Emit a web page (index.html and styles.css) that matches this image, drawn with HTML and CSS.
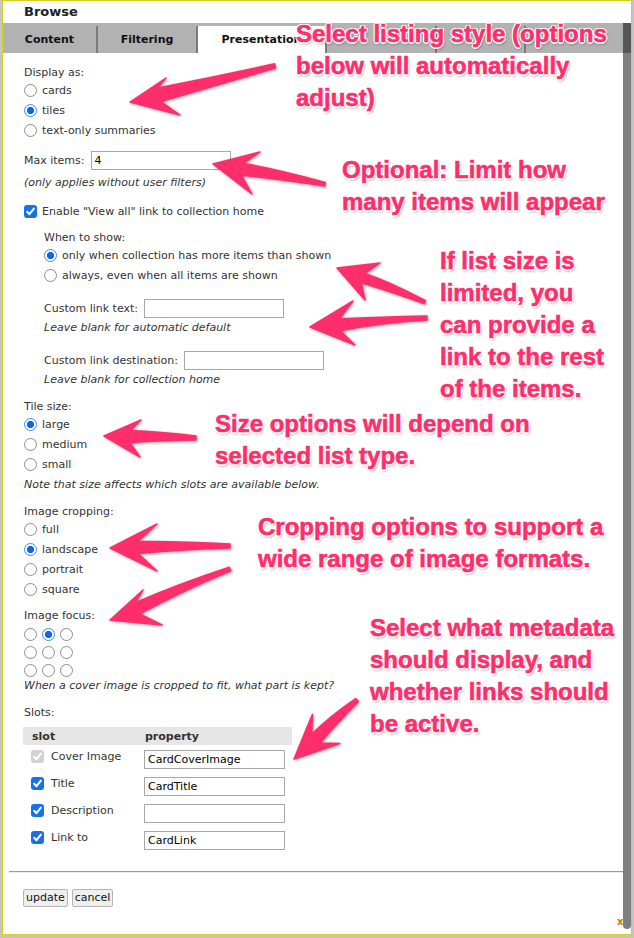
FILE: index.html
```html
<!DOCTYPE html>
<html>
<head>
<meta charset="utf-8">
<title>Browse</title>
<link rel="stylesheet" href="styles.css">
</head>
<body>
<div class="dialog">
  <div class="titlebar">Browse</div>
  <div class="frame">
    <div class="main">
      <div class="tabs">
        <div class="tab t-content">Content</div>
        <div class="tab t-filter">Filtering</div>
        <div class="tab t-pres active">Presentation</div>
        <div class="tab t-four"></div>
        <div class="tab t-five"></div>
        <div class="tab t-rest"></div>
      </div>
      <div class="panel">
        <div class="lbl">Display as:</div>
        <div class="opt"><span class="radio"></span>cards</div>
        <div class="opt"><span class="radio on"></span>tiles</div>
        <div class="opt"><span class="radio"></span>text-only summaries</div>

        <div class="row f-max">Max items: <span class="input">4</span></div>
        <div class="hint h-max">(only applies without user filters)</div>

        <div class="opt f-enable"><span class="cb"><svg viewBox="0 0 13 13" width="13" height="13"><path d="M3.2 6.8 L5.5 9.2 L9.9 3.6" fill="none" stroke="#fff" stroke-width="2" stroke-linecap="round" stroke-linejoin="round"/></svg></span>Enable "View all" link to collection home</div>

        <div class="sub">
          <div class="lbl f-when">When to show:</div>
          <div class="opt"><span class="radio on"></span>only when collection has more items than shown</div>
          <div class="opt"><span class="radio"></span>always, even when all items are shown</div>

          <div class="row f-linktext">Custom link text: <span class="input"></span></div>
          <div class="hint h-link">Leave blank for automatic default</div>

          <div class="row f-linkdest">Custom link destination: <span class="input"></span></div>
          <div class="hint h-link">Leave blank for collection home</div>
        </div>

        <div class="lbl f-group">Tile size:</div>
        <div class="opt"><span class="radio on"></span>large</div>
        <div class="opt"><span class="radio"></span>medium</div>
        <div class="opt"><span class="radio"></span>small</div>
        <div class="hint h-size">Note that size affects which slots are available below.</div>

        <div class="lbl f-group">Image cropping:</div>
        <div class="opt"><span class="radio"></span>full</div>
        <div class="opt"><span class="radio on"></span>landscape</div>
        <div class="opt"><span class="radio"></span>portrait</div>
        <div class="opt"><span class="radio"></span>square</div>

        <div class="lbl f-focus">Image focus:</div>
        <div class="focus">
          <span class="radio"></span><span class="radio on"></span><span class="radio"></span>
          <span class="radio"></span><span class="radio"></span><span class="radio"></span>
          <span class="radio"></span><span class="radio"></span><span class="radio"></span>
        </div>
        <div class="hint">When a cover image is cropped to fit, what part is kept?</div>

        <div class="lbl f-group">Slots:</div>
        <table class="slots">
          <thead>
            <tr><th class="c-slot">slot</th><th class="c-prop">property</th></tr>
          </thead>
          <tbody>
            <tr>
              <td class="c-slot"><div class="slot"><span class="cb off"><svg viewBox="0 0 13 13" width="13" height="13"><path d="M3.2 6.8 L5.5 9.2 L9.9 3.6" fill="none" stroke="#fff" stroke-width="2" stroke-linecap="round" stroke-linejoin="round"/></svg></span>Cover Image</div></td>
              <td class="c-prop"><span class="input">CardCoverImage</span></td>
            </tr>
            <tr>
              <td class="c-slot"><div class="slot"><span class="cb"><svg viewBox="0 0 13 13" width="13" height="13"><path d="M3.2 6.8 L5.5 9.2 L9.9 3.6" fill="none" stroke="#fff" stroke-width="2" stroke-linecap="round" stroke-linejoin="round"/></svg></span>Title</div></td>
              <td class="c-prop"><span class="input">CardTitle</span></td>
            </tr>
            <tr>
              <td class="c-slot"><div class="slot"><span class="cb"><svg viewBox="0 0 13 13" width="13" height="13"><path d="M3.2 6.8 L5.5 9.2 L9.9 3.6" fill="none" stroke="#fff" stroke-width="2" stroke-linecap="round" stroke-linejoin="round"/></svg></span>Description</div></td>
              <td class="c-prop"><span class="input"></span></td>
            </tr>
            <tr>
              <td class="c-slot"><div class="slot"><span class="cb"><svg viewBox="0 0 13 13" width="13" height="13"><path d="M3.2 6.8 L5.5 9.2 L9.9 3.6" fill="none" stroke="#fff" stroke-width="2" stroke-linecap="round" stroke-linejoin="round"/></svg></span>Link to</div></td>
              <td class="c-prop"><span class="input">CardLink</span></td>
            </tr>
          </tbody>
        </table>
      </div>
      <div class="footer">
        <div class="sep"></div>
        <div class="buttons"><span class="btn">update</span><span class="btn">cancel</span></div>
      </div>
    </div>
    <div class="scrollbar"><div class="sb-top"></div></div>
  </div>
  <span class="resize">x</span>
</div>

<div class="notes">
  <svg class="arrows" width="634" height="938" viewBox="0 0 634 938">
    <g fill="#fe2e6c" stroke="#fe2e6c" stroke-width="1.5" stroke-linejoin="round">
      <path d="M274.6 63.8 Q210 78 157.5 87.9 L166 78 L130 102 L180 115 L160.9 101.5 Q220 84 275.4 68 Z"/>
      <path d="M325.3 182.5 Q280 170 243.6 163.4 L260 152 L213 164 L252 194 L241.4 175.2 Q285 180 324.7 186 Z"/>
      <path d="M425.5 300.6 Q390 282 364.9 273.4 L380 263 L337 268 L365 300 L361.3 282.8 Q395 293 424.5 303.8 Z"/>
      <path d="M426.9 316 Q380 317 339.4 318.7 L353 301 L310 327 L355 345 L340.4 330.7 Q385 322 427.1 320 Z"/>
      <path d="M196 436 Q160 432 130.1 430.6 L141 420 L104 436 L140 457 L129.9 442.6 Q165 440 196 440 Z"/>
      <path d="M230 544 Q180 541 137.9 541.5 L157 524 L110 548 L157 571 L138.1 553.5 Q185 549 230 548 Z"/>
      <path d="M229.2 567.2 Q175 585 135.3 602.8 L143 590 L110 620 L162 625 L139.9 613.8 Q190 587 230.8 570.8 Z"/>
      <path d="M355.6 698.5 Q330 716 311.8 734.1 L312.4 714.3 L294 759 L339.8 743.5 L320 742.9 Q340 720 358.4 701.5 Z"/>
    </g>
  </svg>
  <div class="callout c1">Select listing style (options<br>below will automatically<br>adjust)</div>
  <div class="callout c2">Optional: Limit how<br>many items will appear</div>
  <div class="callout c3">If list size is<br>limited, you<br>can provide a<br>link to the rest<br>of the items.</div>
  <div class="callout c4">Size options will depend on<br>selected list type.</div>
  <div class="callout c5">Cropping options to support a<br>wide range of image formats.</div>
  <div class="callout c6">Select what metadata<br>should display, and<br>whether links should<br>be active.</div>
</div>
</body>
</html>
```

FILE: styles.css
```css
html, body {
  margin: 0;
  padding: 0;
}

body {
  width: 634px;
  height: 938px;
  overflow: hidden;
  background: #c5c5c5;
  font-family: "DejaVu Sans", Verdana, sans-serif;
  font-size: 11px;
  color: #333;
  position: relative;
}

.dialog {
  position: relative;
  margin-left: 2px;
  width: 628px;
  height: 933px;
  border: 1px solid #d6d01c;
  background: #fff;
  display: flex;
  flex-direction: column;
}

.titlebar {
  height: 22px;
  line-height: 22px;
  padding-left: 21px;
  font-weight: bold;
  font-size: 13px;
  color: #222;
}

.frame {
  flex: 1;
  display: flex;
}

.main {
  width: 620px;
  display: flex;
  flex-direction: column;
}

.scrollbar {
  width: 8px;
  margin-bottom: 5px;
  background: #7e7e7e;
  border-radius: 0 0 4px 4px;
}

.sb-top {
  height: 30px;
  background: #555;
}

/* tabs */
.tabs {
  height: 30px;
  background: #b2b2b2;
  display: flex;
  align-items: flex-end;
}

.tab {
  box-sizing: border-box;
  height: 27px;
  line-height: 27px;
  text-align: center;
  font-weight: bold;
  font-size: 11px;
  color: #111;
  border-left: 2px solid #7a7a7a;
}

.t-content { width: 93px; border-left: 0; }
.t-filter { width: 100px; }
.t-pres { width: 129px; }
.t-four { width: 110px; }
.t-five { width: 89px; }
.t-rest { flex: 1; }

.tab.active {
  background: #fff;
}

/* panel */
.panel {
  flex: 1;
  padding: 13px 0 0 21px;
}

.lbl {
  line-height: 14px;
}

.hint {
  font-style: italic;
  line-height: 14px;
}

.opt {
  height: 20px;
  display: flex;
  align-items: center;
  gap: 5px;
}

.row {
  height: 20px;
  display: flex;
  align-items: center;
  gap: 6px;
}

.f-max { margin-top: 10px; }
.h-max { margin-top: 6px; }
.f-enable { margin-top: 11px; }
.f-when { margin-top: 10px; }
.f-linktext { margin-top: 13px; }
.f-linkdest { margin-top: 15px; }
.h-link { margin-top: 3px; }
.f-group { margin-top: 13px; }
.h-size { margin-top: 4px; }
.f-focus { margin-top: 10px; }

.sub {
  padding-left: 20px;
}

.input {
  box-sizing: border-box;
  display: inline-block;
  vertical-align: top;
  width: 140px;
  height: 19px;
  line-height: 17px;
  padding: 0 3px;
  border: 1px solid #a8a8a8;
  background: #fff;
  color: #000;
  font-size: 11px;
}

/* custom controls */
.radio {
  box-sizing: border-box;
  display: inline-block;
  flex: none;
  width: 13px;
  height: 13px;
  border-radius: 50%;
  border: 1px solid #8d8d8d;
  background: #fff;
}

.radio.on {
  border: 1.5px solid #3a8cf2;
  background: radial-gradient(circle, #0d66e3 0 3.3px, #fff 3.9px);
}

.cb {
  flex: none;
  display: inline-flex;
  width: 13px;
  height: 13px;
  border-radius: 3px;
  background: #1770ec;
}

.cb.off {
  background: #d2d2d2;
}

.focus {
  margin-top: 2px;
  width: 54px;
  display: grid;
  grid-template-columns: repeat(3, 13px);
  grid-auto-rows: 18px;
  column-gap: 5px;
  align-items: center;
}

/* slots table */
.slots {
  margin: 7px 0 0 -1px;
  width: 269px;
  border-collapse: collapse;
}

.slots th {
  height: 18px;
  padding: 0;
  background: #e6e6e6;
  text-align: left;
  font-weight: bold;
  font-size: 11px;
  color: #333;
}

.slots th.c-slot { padding-left: 9px; width: 108px; }
.slots th.c-prop { padding-left: 5px; }

.slots td {
  vertical-align: top;
  padding: 5px 0 3px 0;
  height: 19px;
}

.slots td.c-slot { padding-left: 8px; }
.slots td.c-prop { padding-left: 4px; }

.slot {
  display: flex;
  align-items: center;
  gap: 7px;
  height: 13px;
}

.c-prop .input {
  width: 141px;
}

/* footer */
.footer {
  padding-bottom: 27px;
}

.sep {
  margin-left: 6px;
  border-top: 1px solid #9b9b9b;
  border-bottom: 1px solid #ececec;
}

.buttons {
  margin: 16px 0 0 20px;
  display: flex;
  gap: 4px;
}

.btn {
  box-sizing: border-box;
  height: 18px;
  line-height: 16px;
  padding: 0 2px;
  border: 1px solid #b4b4b4;
  border-radius: 2px;
  background: #efefef;
  color: #111;
  font-size: 11px;
}

.resize {
  position: absolute;
  left: 614px;
  top: 916px;
  font-size: 10px;
  line-height: 10px;
  font-weight: bold;
  color: #e07000;
}

/* annotations */
.notes {
  position: absolute;
  left: 0;
  top: 0;
  width: 634px;
  height: 938px;
  pointer-events: none;
}

.arrows {
  position: absolute;
  left: 0;
  top: 0;
  filter: drop-shadow(1px 1.5px 1.5px rgba(0, 0, 0, 0.35));
}

.callout {
  position: absolute;
  white-space: nowrap;
  font-family: "Liberation Sans", Arial, sans-serif;
  font-weight: bold;
  font-size: 24px;
  line-height: 32px;
  color: #fe2e6c;
  -webkit-text-stroke: 0.6px #fe2e6c;
  text-shadow:
    -1px -1px 0 #fff, 1px -1px 0 #fff, -1px 1px 0 #fff, 1px 1px 0 #fff,
    0 -1.5px 0 #fff, 0 1.5px 0 #fff, -1.5px 0 0 #fff, 1.5px 0 0 #fff,
    1px 2px 3px rgba(0, 0, 0, 0.45);
}

.c1 { left: 296px; top: 18px; }
.c2 { left: 342px; top: 154px; }
.c3 { left: 440px; top: 245px; }
.c4 { left: 215px; top: 408px; }
.c5 { left: 258px; top: 511px; }
.c6 { left: 370px; top: 612px; }
```
